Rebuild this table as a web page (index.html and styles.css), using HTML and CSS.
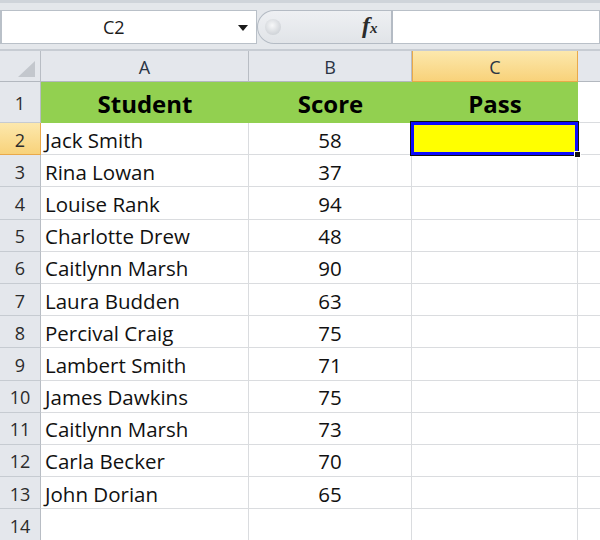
FILE: index.html
```html
<!DOCTYPE html>
<html>
<head>
<meta charset="utf-8">
<link rel="stylesheet" href="styles.css">
</head>
<body>
<div class="app">
  <div class="fbar">
    <div class="namebox">
      <span class="ref">C2</span>
      <span class="dd"></span>
    </div>
    <div class="fctrl">
      <span class="knob"></span>
      <span class="fx"><i>f</i><i class="x">x</i></span>
    </div>
    <div class="finput"></div>
  </div>
  <div class="sheet">
    <div class="hd corner"><span class="tri"></span></div>
    <div class="hd col">A</div>
    <div class="hd col">B</div>
    <div class="hd col sel">C</div>
    <div class="hd col last"></div>

    <div class="rh r1">1</div>
    <div class="c g b">Student</div>
    <div class="c g b ctr">Score</div>
    <div class="c g b ctr">Pass</div>
    <div class="c last"></div>

    <div class="rh sel">2</div><div class="c">Jack Smith</div><div class="c ctr">58</div><div class="c active"><span class="handle"></span></div><div class="c last"></div>
    <div class="rh">3</div><div class="c">Rina Lowan</div><div class="c ctr">37</div><div class="c"></div><div class="c last"></div>
    <div class="rh">4</div><div class="c">Louise Rank</div><div class="c ctr">94</div><div class="c"></div><div class="c last"></div>
    <div class="rh">5</div><div class="c">Charlotte Drew</div><div class="c ctr">48</div><div class="c"></div><div class="c last"></div>
    <div class="rh">6</div><div class="c">Caitlynn Marsh</div><div class="c ctr">90</div><div class="c"></div><div class="c last"></div>
    <div class="rh">7</div><div class="c">Laura Budden</div><div class="c ctr">63</div><div class="c"></div><div class="c last"></div>
    <div class="rh">8</div><div class="c">Percival Craig</div><div class="c ctr">75</div><div class="c"></div><div class="c last"></div>
    <div class="rh">9</div><div class="c">Lambert Smith</div><div class="c ctr">71</div><div class="c"></div><div class="c last"></div>
    <div class="rh">10</div><div class="c">James Dawkins</div><div class="c ctr">75</div><div class="c"></div><div class="c last"></div>
    <div class="rh">11</div><div class="c">Caitlynn Marsh</div><div class="c ctr">73</div><div class="c"></div><div class="c last"></div>
    <div class="rh">12</div><div class="c">Carla Becker</div><div class="c ctr">70</div><div class="c"></div><div class="c last"></div>
    <div class="rh">13</div><div class="c">John Dorian</div><div class="c ctr">65</div><div class="c"></div><div class="c last"></div>
    <div class="rh">14</div><div class="c"></div><div class="c"></div><div class="c"></div><div class="c last"></div>
  </div>
</div>
</body>
</html>
```
FILE: styles.css
```css
* { box-sizing: border-box; }
html, body { margin: 0; padding: 0; }
body {
  width: 600px;
  height: 540px;
  overflow: hidden;
  background: #ffffff;
  font-family: "Open Sans", Lato, sans-serif;
}
.app { width: 600px; height: 540px; overflow: hidden; }

.fbar {
  height: 51px;
  background: #e4e7eb;
  border-top: 3px solid #cfd4da;
  border-bottom: 2px solid #c7ccd3;
  display: flex;
  align-items: flex-start;
  padding-top: 7px;
  position: relative;
}
.namebox {
  width: 257px;
  height: 34px;
  background: #ffffff;
  border: 1px solid #b9c0c8;
  border-left: 2px solid #b9c0c8;
  position: relative;
}
.ref {
  position: absolute;
  left: 101px;
  top: 4px;
  font-size: 18px;
  color: #1b1b1b;
}
.dd {
  position: absolute;
  left: 236px;
  top: 14px;
  width: 0; height: 0;
  border-left: 5px solid transparent;
  border-right: 5px solid transparent;
  border-top: 6px solid #1a1a1a;
}
.fctrl {
  width: 136px;
  height: 34px;
  background: linear-gradient(#eef0f3, #e1e4e8);
  border: 1px solid #b4bbc4;
  border-right: 2px solid #b4bbc4;
  border-radius: 17px 0 0 17px;
  position: relative;
}
.knob {
  position: absolute;
  left: 7px;
  top: 8px;
  width: 16px; height: 16px;
  border-radius: 50%;
  background: radial-gradient(circle at 45% 40%, #f7f8f9, #d9dce0 55%, #c3c8ce);
}
.fx {
  position: absolute;
  left: 104px;
  top: 1px;
  font-family: "Liberation Serif", serif;
  font-weight: bold;
  font-size: 24px;
  color: #2b2b2b;
}
.fx i { font-style: italic; }
.fx .x { font-size: 15px; margin-left: 0; }
.finput {
  flex: 1;
  height: 34px;
  background: #ffffff;
  border: 1px solid #b9c0c8;
  border-left: none;
}

.sheet {
  display: grid;
  grid-template-columns: 41px 208px 163px 166px 1fr;
  grid-template-rows: 31px 41px repeat(13, 32.2px);
}
.hd {
  background: #e4e7ec;
  border-right: 1px solid #b8bdc4;
  border-bottom: 1px solid #b3b8bf;
  display: flex;
  align-items: center;
  justify-content: center;
  font-size: 18px;
  color: #2a3444;
  padding-top: 1px;
}
.hd.last { border-right: none; }
.hd.sel {
  background: linear-gradient(#fce8ad, #f8d27a);
  border: 1px solid #e9a94a;
  border-top: none;
}
.corner { position: relative; }
.tri {
  position: absolute;
  right: 5px;
  bottom: 4px;
  width: 0; height: 0;
  border-left: 17px solid transparent;
  border-bottom: 16px solid #c3c7cd;
}
.rh {
  background: #e4e7ec;
  border-right: 1px solid #b8bdc4;
  border-bottom: 1px solid #c6cbd1;
  display: flex;
  align-items: center;
  justify-content: center;
  font-size: 18px;
  color: #2b2b2b;
  padding-top: 2px;
}
.rh.sel {
  background: linear-gradient(#fce8ad, #f8d27a);
  border-right: 1px solid #e9a94a;
  border-bottom: 1px solid #e9a94a;
}
.c {
  border-right: 1px solid #dadcdf;
  border-bottom: 1px solid #dadcdf;
  display: flex;
  align-items: center;
  padding-left: 4px;
  padding-top: 2px;
  font-size: 20.5px;
  color: #111111;
  white-space: nowrap;
}
.c.last { border-right: none; }
.c.ctr { justify-content: center; padding-left: 0; }
.c.g {
  background: #92d050;
  border-right: none;
  border-bottom: none;
}
.c.b {
  font-weight: bold;
  font-size: 24px;
  justify-content: center;
  padding-left: 0;
  color: #000000;
}
.c.active {
  background: #ffff00;
  border: 3px solid #0a0aff;
  outline: 1px solid #111111;
  position: relative;
  margin: -1px 0 0 -1px;
}
.handle {
  position: absolute;
  right: -6px;
  bottom: -6px;
  width: 7px;
  height: 7px;
  background: #111111;
  border: 1px solid #ffffff;
}
```
